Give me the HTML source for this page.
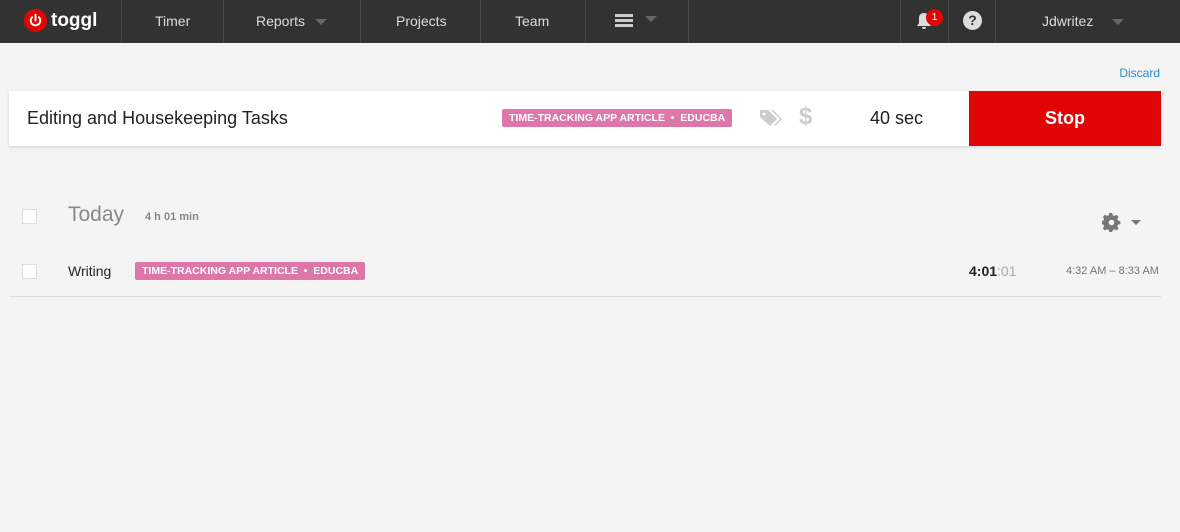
<!DOCTYPE html>
<html><head><style>
*{margin:0;padding:0;box-sizing:border-box}
body{width:1180px;height:532px;background:#f4f4f4;font-family:"Liberation Sans",sans-serif;position:relative;overflow:hidden}
.nav{position:absolute;left:0;top:0;width:1180px;height:43px;background:#323232}
.sep{position:absolute;top:0;width:1px;height:43px;background:#474747}
.nt{position:absolute;top:13px;color:#ddd;font-size:14px}
.car{position:absolute;width:0;height:0;border-left:6px solid transparent;border-right:6px solid transparent;border-top:6px solid #666}
.bar{position:absolute;left:9px;top:91px;width:1152px;height:55px;background:#fff;box-shadow:0 1px 3px rgba(0,0,0,.15)}
.tag{position:absolute;background:#dd76a9;color:#fff;font-weight:bold;font-size:10.5px;height:18px;line-height:18px;padding:0 7px;border-radius:2px;white-space:nowrap}
.cb{position:absolute;width:15px;height:15px;border:1px solid #ddd;background:#fff}
</style></head><body>
<div class="nav">
  <svg style="position:absolute;left:24px;top:9px" width="23" height="23" viewBox="0 0 24 24"><circle cx="12" cy="12" r="12" fill="#e20505"/><path d="M8.5 8.5a5 5 0 1 0 7 0" stroke="#fff" stroke-width="2" fill="none" stroke-linecap="round"/><path d="M12 6v6" stroke="#fff" stroke-width="2" stroke-linecap="round"/></svg>
  <div style="position:absolute;left:51px;top:10px;color:#fff;font-weight:bold;font-size:19px">toggl</div>
  <div class="sep" style="left:121px"></div><div class="sep" style="left:223px"></div><div class="sep" style="left:360px"></div><div class="sep" style="left:480px"></div><div class="sep" style="left:585px"></div><div class="sep" style="left:688px"></div><div class="sep" style="left:900px"></div><div class="sep" style="left:948px"></div><div class="sep" style="left:995px"></div>
  <div class="nt" style="left:155px">Timer</div>
  <div class="nt" style="left:256px">Reports</div><div class="car" style="left:315px;top:19px"></div>
  <div class="nt" style="left:396px">Projects</div>
  <div class="nt" style="left:515px">Team</div>
  <div style="position:absolute;left:615px;top:14px;width:18px;height:3px;background:#ccc;box-shadow:0 5px 0 #ccc,0 10px 0 #ccc"></div><div class="car" style="left:645px;top:16px"></div>
  <svg style="position:absolute;left:916px;top:12px" width="16" height="18" viewBox="0 0 16 18"><path d="M8 1c-3 0-5 2-5 5v5l-2 3h14l-2-3V6c0-3-2-5-5-5zM6 15a2 2 0 0 0 4 0z" fill="#ddd"/></svg>
  <div style="position:absolute;left:926px;top:9px;width:17px;height:17px;border-radius:50%;background:#e20505;color:#fff;font-size:10px;text-align:center;line-height:17px">1</div>
  <div style="position:absolute;left:963px;top:11px;width:19px;height:19px;border-radius:50%;background:#ddd;color:#323232;font-weight:bold;font-size:14px;text-align:center;line-height:19px">?</div>
  <div class="nt" style="left:1042px">Jdwritez</div><div class="car" style="left:1112px;top:19px"></div>
</div>
<div style="position:absolute;right:20px;top:66px;color:#2c8bd6;font-size:12px">Discard</div>
<div class="bar">
  <div style="position:absolute;left:18px;top:17px;font-size:18px;color:#222">Editing and Housekeeping Tasks</div>
  <div class="tag" style="left:493px;top:18px">TIME-TRACKING APP ARTICLE &nbsp;•&nbsp; EDUCBA</div>
  <svg style="position:absolute;left:750px;top:17px" width="24" height="20" viewBox="0 0 24 20"><path d="M1 2h8l9 9-7 7-10-9z" fill="#ccc"/><path d="M12 2h2l9 9-7 7-1-1 6-6z" fill="#ccc"/><circle cx="5" cy="6" r="1.5" fill="#fff"/></svg>
  <div style="position:absolute;left:790px;top:12px;font-size:24px;color:#ccc;font-weight:bold">$</div>
  <div style="position:absolute;left:861px;top:17px;font-size:18px;color:#222">40 sec</div>
  <div style="position:absolute;left:960px;top:0;width:192px;height:55px;background:#e20505;color:#fff;font-weight:bold;font-size:18px;text-align:center;line-height:55px">Stop</div>
</div>
<div class="cb" style="left:22px;top:209px"></div>
<div style="position:absolute;left:68px;top:203px;font-size:21px;color:#888">Today</div>
<div style="position:absolute;left:145px;top:211px;font-size:11px;color:#888;font-weight:bold">4 h 01 min</div>
<svg style="position:absolute;left:1102px;top:213px" width="19" height="19" viewBox="0 0 24 24"><path fill="#777" d="M10 1h4l.6 3 2.4 1 2.6-1.7 2.8 2.8L20.7 8.7l1 2.4 3 .6v4l-3 .6-1 2.4 1.7 2.6-2.8 2.8-2.6-1.7-2.4 1-.6 3h-4l-.6-3-2.4-1-2.6 1.7-2.8-2.8 1.7-2.6-1-2.4-3-.6v-4l3-.6 1-2.4L1.6 6.1 4.4 3.3 7 5l2.4-1z" transform="translate(-0.5,-1) scale(0.96)"/><circle cx="12" cy="12" r="3.5" fill="#f4f4f4"/></svg>
<div class="car" style="left:1131px;top:220px;border-width:5px 5px 0;border-top-color:#777"></div>
<div class="cb" style="left:22px;top:264px"></div>
<div style="position:absolute;left:68px;top:263px;font-size:14px;color:#222">Writing</div>
<div class="tag" style="left:135px;top:262px">TIME-TRACKING APP ARTICLE &nbsp;•&nbsp; EDUCBA</div>
<div style="position:absolute;left:969px;top:263px;font-size:14px;color:#222"><b>4:01</b><span style="color:#aaa">:01</span></div>
<div style="position:absolute;left:1066px;top:265px;font-size:11px;color:#777">4:32 AM – 8:33 AM</div>
<div style="position:absolute;left:9px;top:296px;width:1152px;height:1px;background:#ddd"></div>
</body></html>
